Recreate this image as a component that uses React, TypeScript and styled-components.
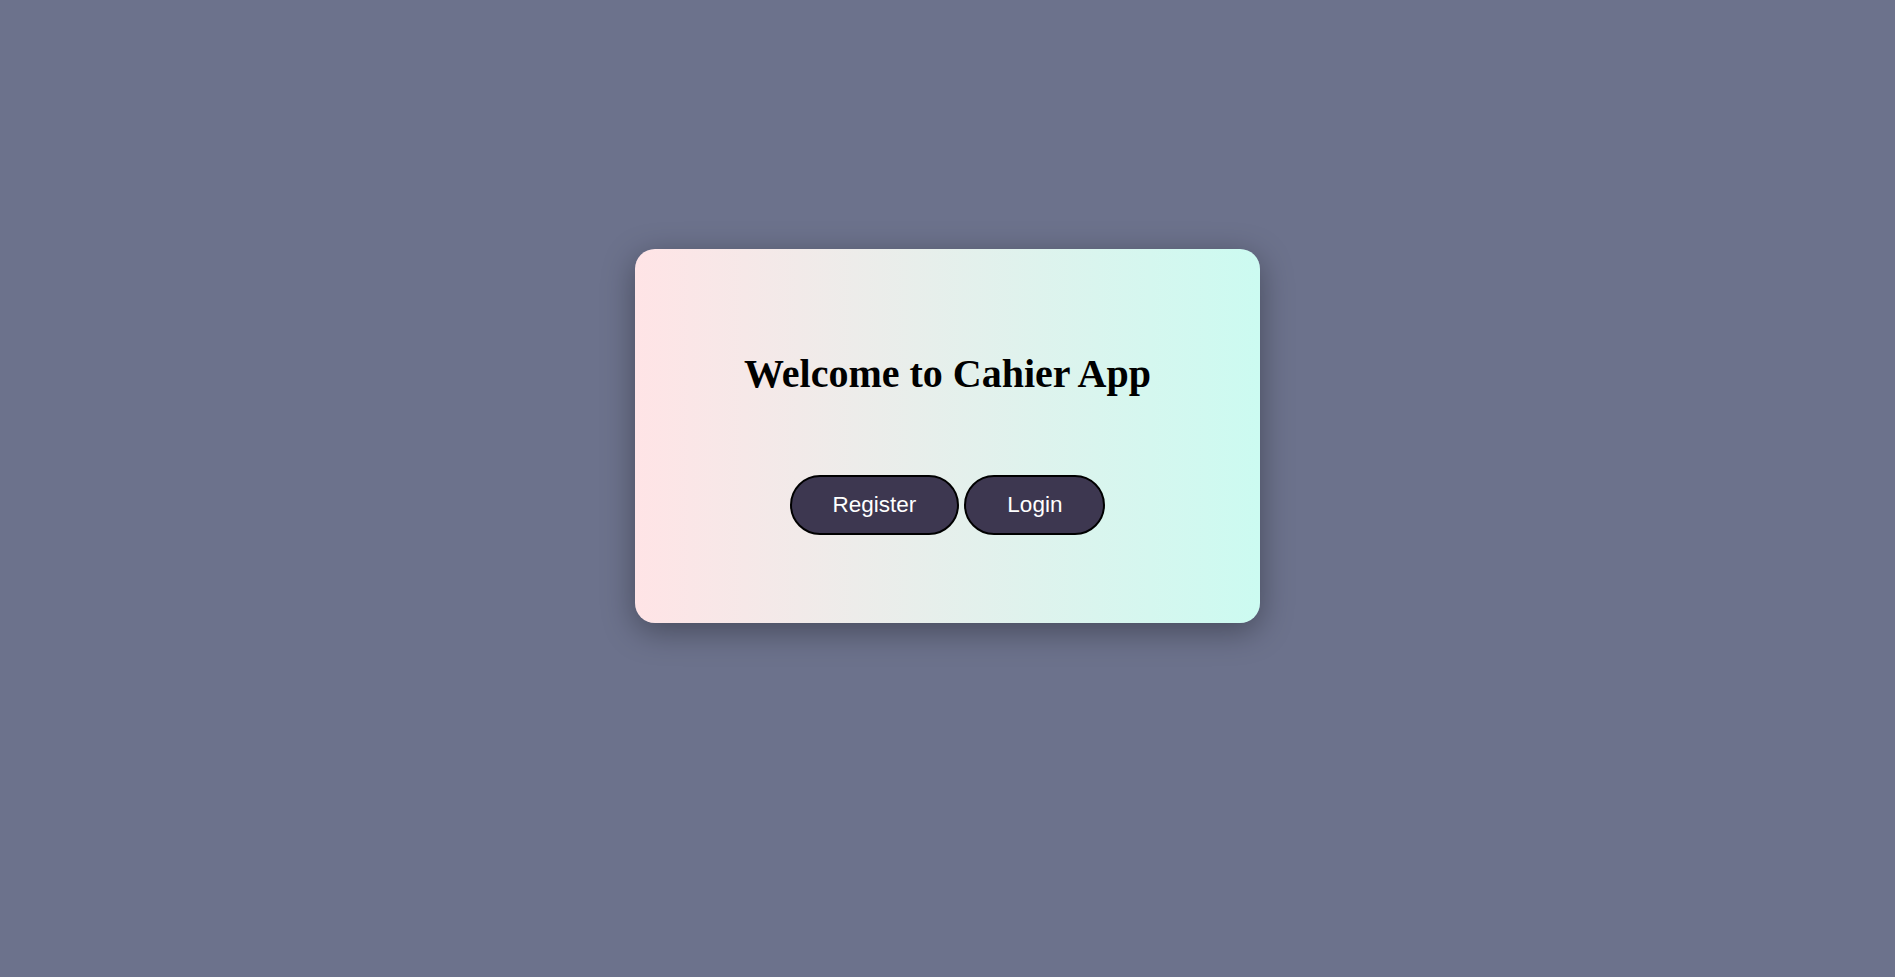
import React from "react";
import styled, { createGlobalStyle } from "styled-components";

const GlobalStyle = createGlobalStyle`
  html, body {
    margin: 0;
    padding: 0;
    background-color: #6c728c;
  }
  * {
    box-sizing: border-box;
  }
`;

export default function App() {
  return (
    <>
      <GlobalStyle />
      <Page>
        <Card>
          <Title>Welcome to Cahier App</Title>
          <Actions>
            <Button>Register</Button>
            <Button>Login</Button>
          </Actions>
        </Card>
      </Page>
    </>
  );
}

const Page = styled.div`
  width: 100%;
  min-height: 100vh;
  display: flex;
  justify-content: center;
  align-items: flex-start;
  padding-top: 249px;
`;

const Card = styled.div`
  width: 625px;
  display: flex;
  flex-direction: column;
  align-items: center;
  padding: 101px 0 88px;
  border-radius: 20px;
  background: linear-gradient(to right, #ffe4e6, #ccfbf1);
  box-shadow: 0 8px 32px rgba(0, 0, 0, 0.35);
`;

const Title = styled.h1`
  margin: 0 0 78px;
  font-family: "Liberation Serif", "Times New Roman", serif;
  font-size: 40px;
  font-weight: bold;
  color: #000;
`;

const Actions = styled.div`
  display: flex;
  gap: 5px;
`;

const Button = styled.button`
  padding: 15px 41px;
  border: 2px solid #000;
  border-radius: 30px;
  background-color: #3d3750;
  color: #fff;
  font-family: "Liberation Sans", Arial, sans-serif;
  font-size: 22.5px;
  line-height: normal;
  cursor: pointer;
`;
